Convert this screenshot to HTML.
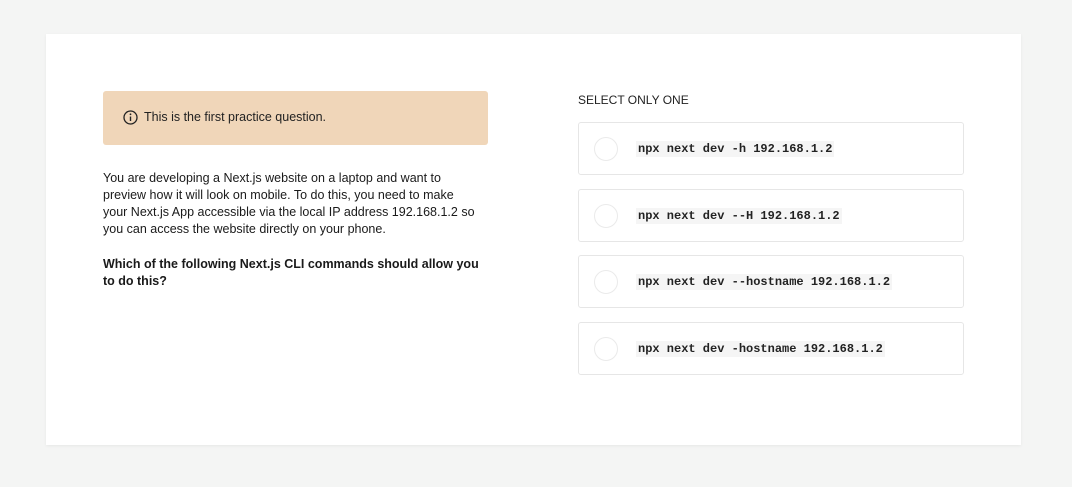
<!DOCTYPE html>
<html><head><style>
body{margin:0;background:#f4f5f4;width:1072px;height:487px;position:relative;font-family:"Liberation Sans",sans-serif;color:#1a1a1a;}
.card{position:absolute;left:46px;top:34px;width:975px;height:411px;background:#fff;box-shadow:0 1px 3px rgba(0,0,0,.06);}
.alert{position:absolute;left:103px;top:91px;width:385px;height:54px;background:#f0d6b9;border-radius:3px;}
.alert span{position:absolute;left:41px;top:19px;font-size:12.5px;color:#222;}
.alert svg{position:absolute;left:20px;top:19px;}
.p{position:absolute;left:103px;top:170px;width:377px;font-size:12.5px;line-height:17px;}
.q{position:absolute;left:103px;top:256px;width:385px;font-size:12.5px;line-height:17px;font-weight:bold;}
.sel{position:absolute;left:578px;top:93px;font-size:12px;color:#222;}
.opt{position:absolute;left:578px;width:384px;height:51px;border:1px solid #e6e6e6;border-radius:3px;}
.opt i{position:absolute;left:15px;top:14px;width:22px;height:22px;border:1px solid #eaeaea;border-radius:50%;}
.opt code{position:absolute;left:57px;top:18px;font-family:"Liberation Mono","DejaVu Sans Mono",monospace;font-weight:bold;font-size:12px;background:#f5f5f5;padding:1px 2px;color:#222;}
</style></head><body>
<div class="card"></div>
<div class="alert"><svg width="15" height="15" viewBox="0 0 15 15"><circle cx="7.5" cy="7.5" r="6.5" fill="none" stroke="#222" stroke-width="1.3"/><line x1="7.5" y1="6.5" x2="7.5" y2="11" stroke="#222" stroke-width="1.4"/><circle cx="7.5" cy="4.3" r=".9" fill="#222"/></svg><span>This is the first practice question.</span></div>
<div class="p">You are developing a Next.js website on a laptop and want to<br>preview how it will look on mobile. To do this, you need to make<br>your Next.js App accessible via the local IP address 192.168.1.2 so<br>you can access the website directly on your phone.</div>
<div class="q">Which of the following Next.js CLI commands should allow you to do this?</div>
<div class="sel">SELECT ONLY ONE</div>
<div class="opt" style="top:122px"><i></i><code>npx next dev -h 192.168.1.2</code></div>
<div class="opt" style="top:189px"><i></i><code>npx next dev --H 192.168.1.2</code></div>
<div class="opt" style="top:255px"><i></i><code>npx next dev --hostname 192.168.1.2</code></div>
<div class="opt" style="top:322px"><i></i><code>npx next dev -hostname 192.168.1.2</code></div>
</body></html>
